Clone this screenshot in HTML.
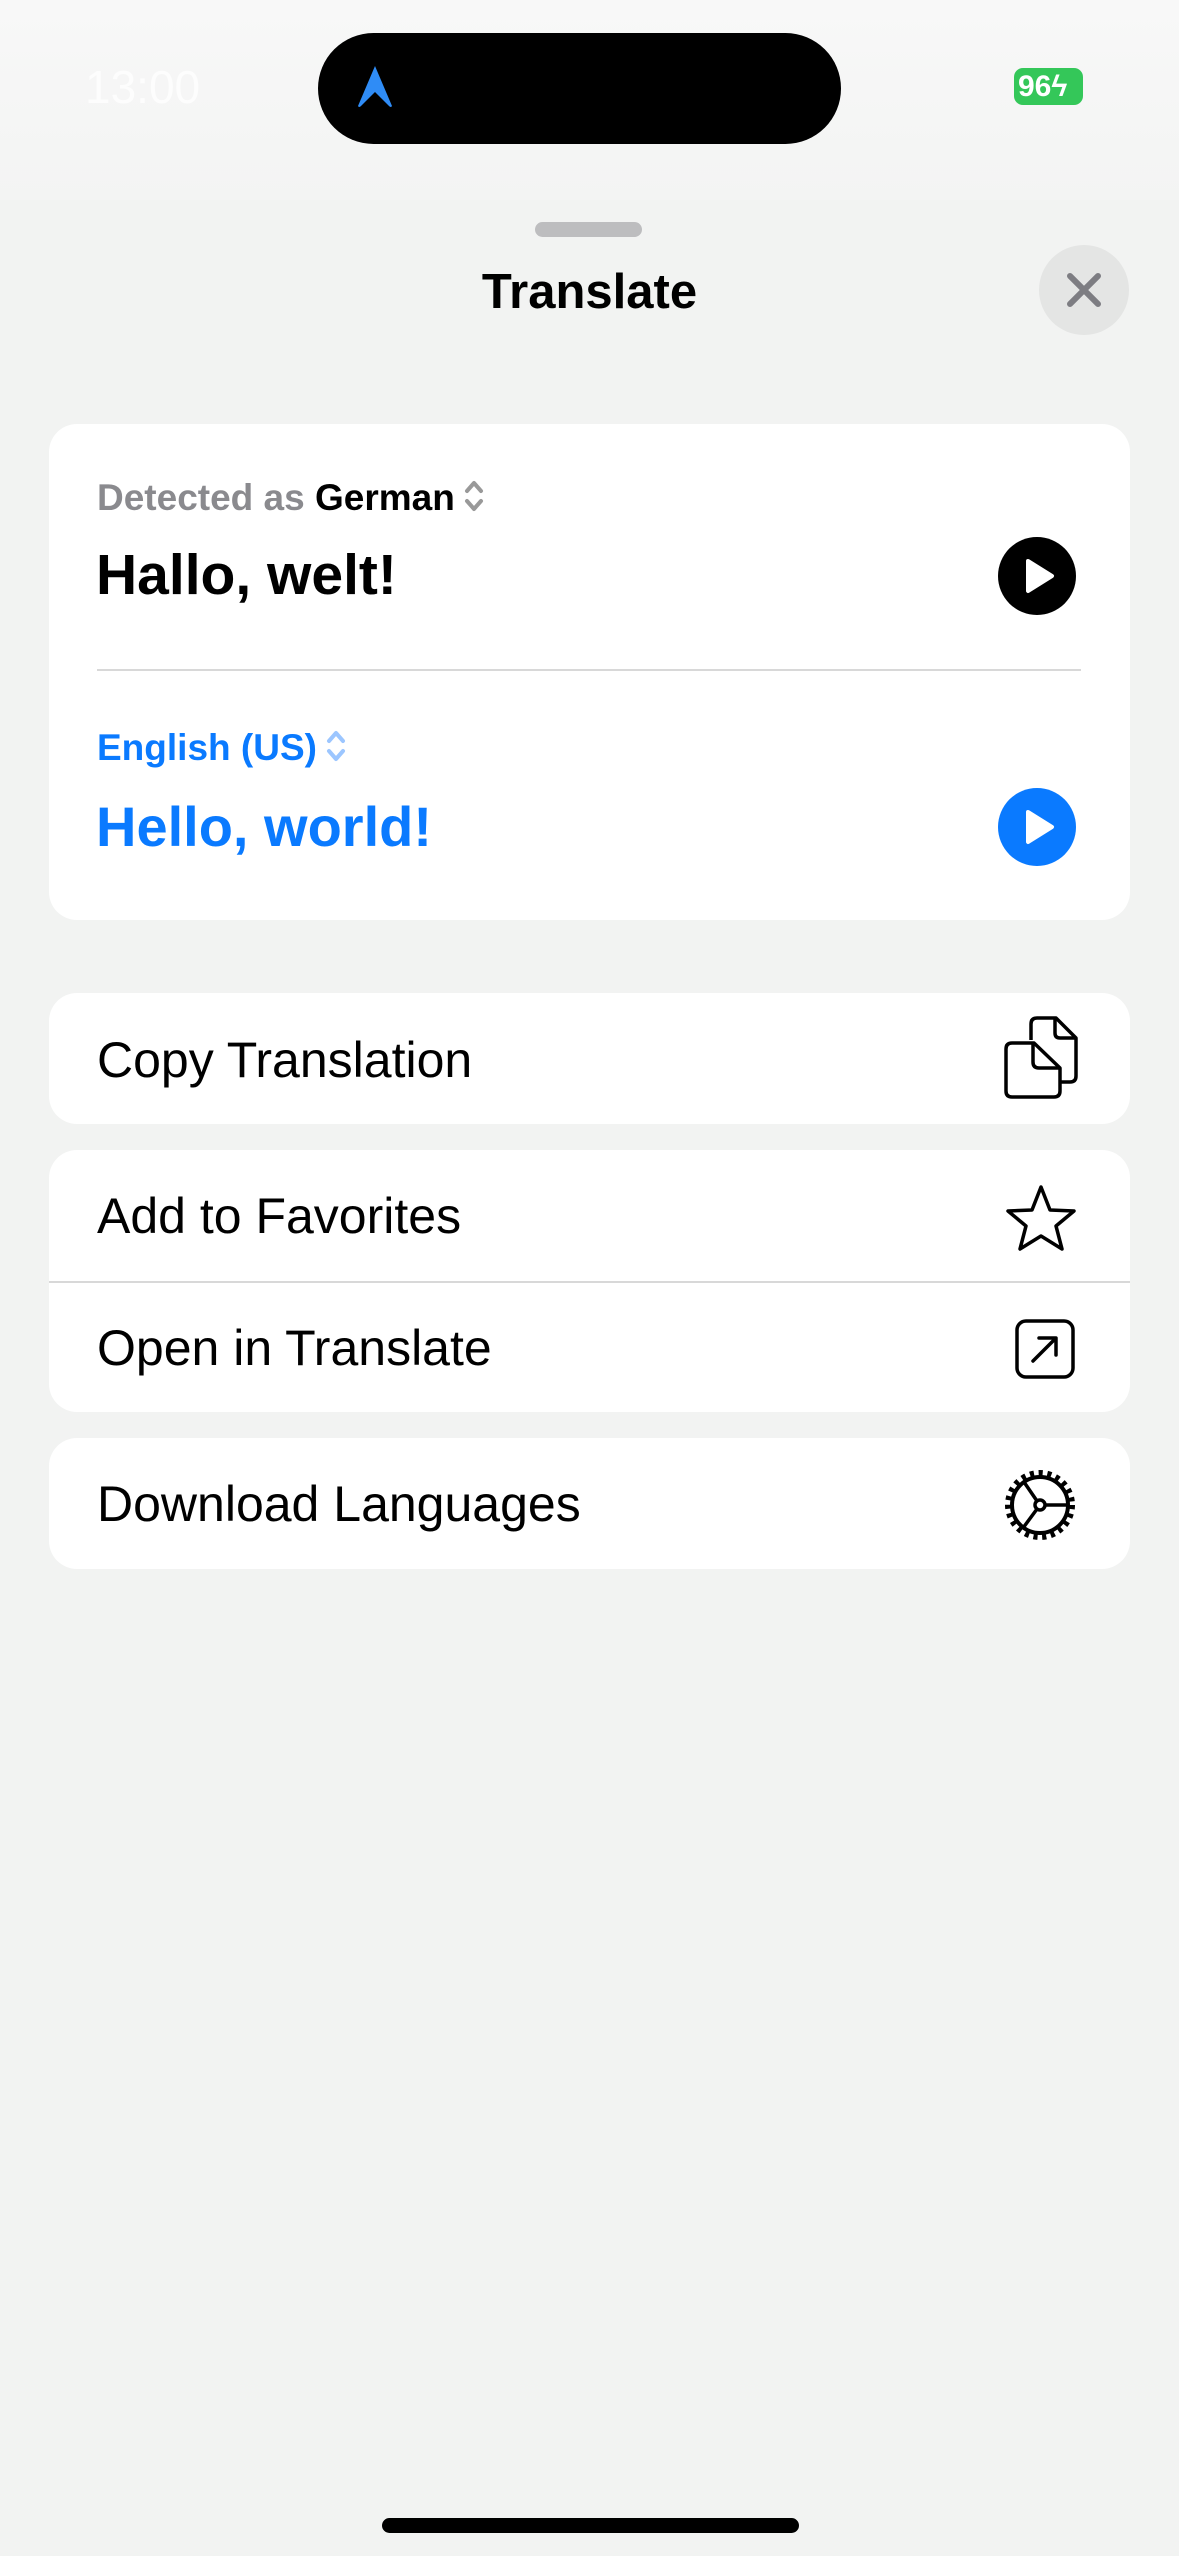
<!DOCTYPE html>
<html><head><meta charset="utf-8"><style>
*{margin:0;padding:0;box-sizing:border-box}
body{width:1179px;height:2556px;background:#f2f3f2;font-family:"Liberation Sans",sans-serif;position:relative;overflow:hidden}
.top{position:absolute;left:0;top:0;width:1179px;height:200px;background:linear-gradient(#f8f8f8,#f3f4f3)}
.abs{position:absolute}
.card{position:absolute;left:49px;width:1081px;background:#fff;border-radius:28px}
.t{position:absolute;white-space:nowrap;line-height:1}
.chev{display:inline-block;vertical-align:-4px;margin-left:8px}
</style></head><body>
<div class="top"></div>
<div class="abs" style="left:318px;top:33px;width:523px;height:111px;background:#000;border-radius:56px"></div>
<svg class="abs" style="left:355px;top:64px" width="40" height="46" viewBox="0 0 40 46"><path d="M20 2 L37 42 Q36 44 34 42 L20 28 L6 42 Q4 44 3 42 Z" fill="#2f8cf6"/></svg>
<div class="t" style="left:85px;top:64px;font-size:46px;color:#fdfdfd">13:00</div>
<div class="abs" style="left:1014px;top:68px;width:69px;height:37px;background:#34c759;border-radius:9px;color:#fff;font-weight:bold;font-size:30px;line-height:37px;padding-left:4px">96ϟ</div>
<div class="abs" style="left:535px;top:222px;width:107px;height:15px;background:#bdbdbf;border-radius:8px"></div>
<div class="t" style="left:0;width:1179px;text-align:center;top:268px;font-size:49px;font-weight:bold">Translate</div>
<div class="abs" style="left:1039px;top:245px;width:90px;height:90px;border-radius:50%;background:#e4e5e4"></div>
<svg class="abs" style="left:1039px;top:245px" width="90" height="90"><path d="M31 31L59 59M59 31L31 59" stroke="#7d7d82" stroke-width="6" stroke-linecap="round"/></svg>

<div class="card" style="top:424px;height:496px"></div>
<div class="t" style="left:97px;top:478px;font-size:37px;color:#8a8a8e;font-weight:bold">Detected as <span style="color:#000">German</span><svg class="chev" width="22" height="36"><path d="M4 13L11 5L18 13M4 23L11 31L18 23" stroke="#999" stroke-width="4" fill="none" stroke-linecap="round" stroke-linejoin="round"/></svg></div>
<div class="t" style="left:96px;top:547px;font-size:57px;font-weight:bold;color:#000">Hallo, welt!</div>
<div class="abs" style="left:998px;top:537px;width:78px;height:78px;border-radius:50%;background:#000"></div>
<svg class="abs" style="left:998px;top:537px" width="78" height="78"><path d="M30 24L54 39L30 54Z" fill="#fff" stroke="#fff" stroke-width="4" stroke-linejoin="round"/></svg>
<div class="abs" style="left:97px;top:669px;width:984px;height:2px;background:#d8d8d8"></div>
<div class="t" style="left:97px;top:728px;font-size:37px;color:#0a7aff;font-weight:bold">English (US)<svg class="chev" width="22" height="36"><path d="M4 13L11 5L18 13M4 23L11 31L18 23" stroke="#9cc6ff" stroke-width="4" fill="none" stroke-linecap="round" stroke-linejoin="round"/></svg></div>
<div class="t" style="left:96px;top:799px;font-size:56px;font-weight:bold;color:#0a7aff">Hello, world!</div>
<div class="abs" style="left:998px;top:788px;width:78px;height:78px;border-radius:50%;background:#0a7aff"></div>
<svg class="abs" style="left:998px;top:788px" width="78" height="78"><path d="M30 24L54 39L30 54Z" fill="#fff" stroke="#fff" stroke-width="4" stroke-linejoin="round"/></svg>

<div class="card" style="top:993px;height:131px"></div>
<div class="t" style="left:97px;top:1035px;font-size:50px">Copy Translation</div>
<svg class="abs" style="left:1000px;top:1010px" width="80" height="100" viewBox="0 0 80 100"><path d="M31 30V14Q31 8 37 8H56L76 28V66Q76 72 70 72H61" stroke="#000" stroke-width="3.5" fill="none" stroke-linejoin="round"/><path d="M55 8V23Q55 28 60 28H76" stroke="#000" stroke-width="3.5" fill="none"/><path d="M6 39Q6 33 12 33H34L60 58V81Q60 87 54 87H12Q6 87 6 81Z" stroke="#000" stroke-width="3.5" fill="#fff" stroke-linejoin="round"/><path d="M33 33V52Q33 58 39 58H60" stroke="#000" stroke-width="3.5" fill="none"/></svg>

<div class="card" style="top:1150px;height:262px"></div>
<div class="abs" style="left:49px;top:1281px;width:1081px;height:2px;background:#d8d8d8"></div>
<div class="t" style="left:97px;top:1191px;font-size:50px">Add to Favorites</div>
<svg class="abs" style="left:1000px;top:1170px" width="80" height="90" viewBox="0 0 80 90"><path d="M41 17L50 40L74 41L56 56L62 79L41 66L20 79L26 56L8 41L32 40Z" stroke="#000" stroke-width="3.5" fill="none" stroke-linejoin="round"/></svg>
<div class="t" style="left:97px;top:1323px;font-size:50px">Open in Translate</div>
<svg class="abs" style="left:1000px;top:1305px" width="80" height="90" viewBox="0 0 80 90"><rect x="17" y="16" width="56" height="56" rx="9" stroke="#000" stroke-width="3.5" fill="none"/><path d="M33 56L55 34M39 33H56V50" stroke="#000" stroke-width="3.5" fill="none" stroke-linecap="round" stroke-linejoin="round"/></svg>

<div class="card" style="top:1438px;height:131px"></div>
<div class="t" style="left:97px;top:1479px;font-size:50px">Download Languages</div>
<svg class="abs" style="left:1000px;top:1460px" width="80" height="90" viewBox="0 0 80 90"><circle cx="40" cy="45" r="31" stroke="#000" stroke-width="8" stroke-dasharray="4 4.5" fill="none"/><circle cx="40" cy="45" r="28" stroke="#000" stroke-width="4" fill="none"/><circle cx="40" cy="45" r="5" stroke="#000" stroke-width="3.5" fill="#fff"/><path d="M45 45H68M37 41L24 22M37 49L23 68" stroke="#000" stroke-width="3.5"/></svg>

<div class="abs" style="left:382px;top:2518px;width:417px;height:15px;background:#000;border-radius:8px"></div>
</body></html>
